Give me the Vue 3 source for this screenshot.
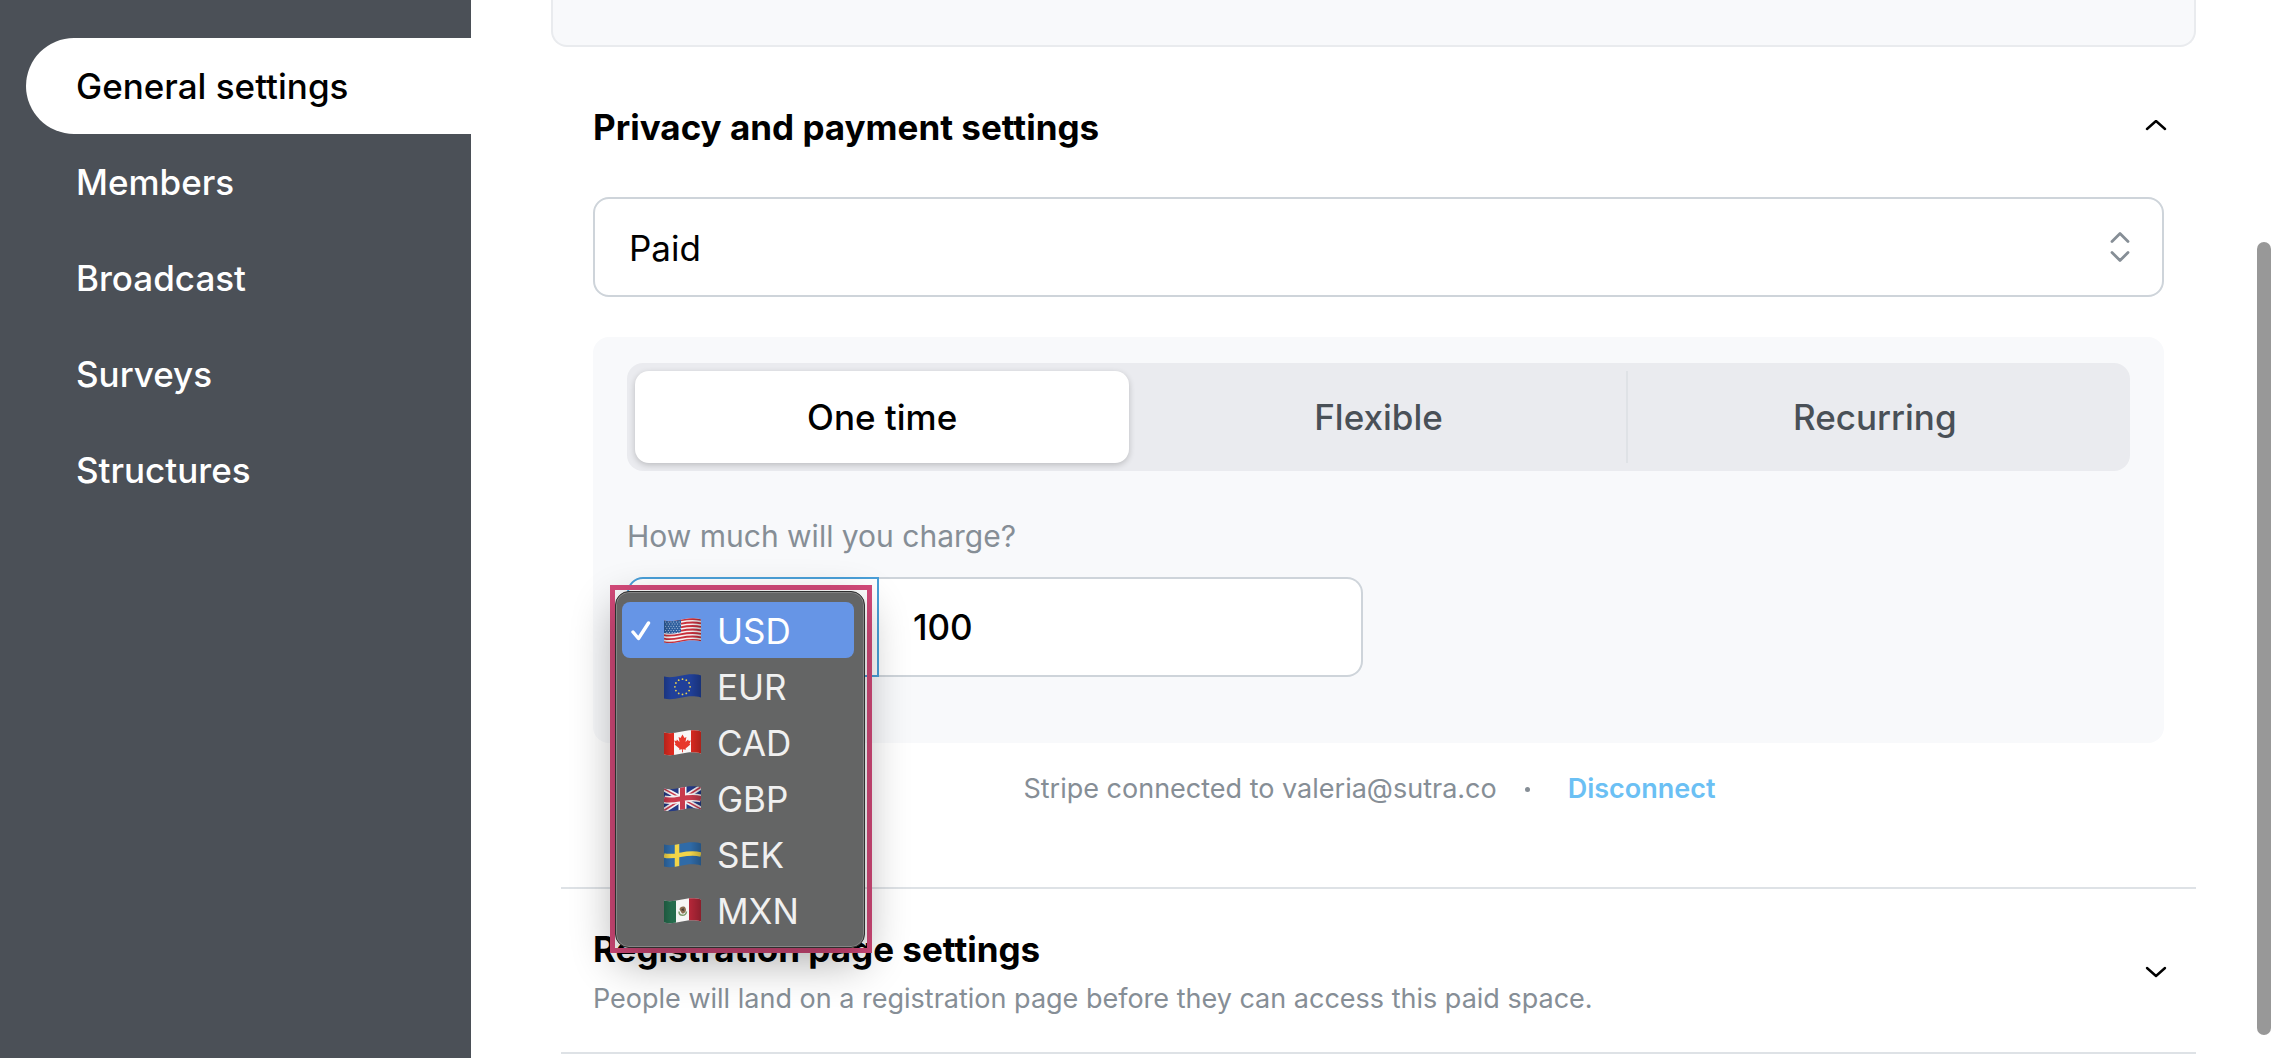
<script setup>
import { ref } from 'vue'

const navItems = ['General settings', 'Members', 'Broadcast', 'Surveys', 'Structures']
const activeItem = ref('General settings')

const plans = ['One time', 'Flexible', 'Recurring']
const plan = ref('One time')

const access = ref('Paid')
const currencies = ['USD', 'EUR', 'CAD', 'GBP', 'SEK', 'MXN']
const currency = ref('USD')
const amount = ref('100')

// Every stripe and edge of a flag follows the same wave
const wave = 'c12 3 22 -5 37 -1'
const stripes = [0, 1, 2, 3, 4, 5, 6].map((n) => 3 + n * 3.5)
const stars = Array.from({ length: 12 }, (_, n) => ({
  x: 18.5 + 7.6 * Math.sin((n * Math.PI) / 6),
  y: 12.8 - 7.6 * Math.cos((n * Math.PI) / 6),
}))
const unionDots = [0, 1, 2, 3, 4, 5].flatMap((r) =>
  [0, 1, 2, 3, 4, 5].map((c) => ({ x: 1.6 + c * 2.7 + (r % 2) * 1.2, y: 4 + r * 2.1 })),
)
</script>

<template>
  <div class="page">
    <svg class="defs" width="0" height="0" aria-hidden="true">
      <defs>
        <clipPath id="flag-shape">
          <path d="M0 2.5c12 3 22-5 37-1v22c-15-4-25 4-37 1z" />
        </clipPath>
        <linearGradient id="flag-shade">
          <stop offset="0" stop-color="#000" stop-opacity=".18" />
          <stop offset=".2" stop-color="#000" stop-opacity="0" />
          <stop offset=".7" stop-color="#000" stop-opacity="0" />
          <stop offset="1" stop-color="#000" stop-opacity=".22" />
        </linearGradient>
      </defs>
    </svg>

    <nav class="sidebar" aria-label="Settings">
      <a
        v-for="item in navItems"
        :key="item"
        href="#"
        class="nav-link"
        :class="{ active: item === activeItem }"
        @click.prevent="activeItem = item"
      >{{ item }}</a>
    </nav>

    <main class="content">
      <div class="card-end"></div>

      <section class="section">
        <div class="section-head">
          <h2>Privacy and payment settings</h2>
          <button class="toggle" type="button" aria-label="Collapse privacy and payment settings">
            <svg width="22" height="14" viewBox="0 0 22 14"><path d="m2 9 9-8 9 8" /></svg>
          </button>
        </div>

        <div class="access">
          <select v-model="access" class="field access-select" aria-label="Access">
            <option>Paid</option>
            <option>Free</option>
          </select>
          <svg class="access-icon" width="20" height="30" viewBox="0 0 20 30">
            <path d="m2 9.5 8-8 8 8M2 20.5l8 8 8-8" />
          </svg>
        </div>

        <div class="panel">
          <div class="segments" role="group" aria-label="Payment type">
            <button
              v-for="p in plans"
              :key="p"
              type="button"
              class="segment"
              :class="{ active: p === plan }"
              :aria-pressed="p === plan"
              @click="plan = p"
            >{{ p }}</button>
          </div>

          <label class="question" for="amount">How much will you charge?</label>
          <div class="charge">
            <div class="currency">
              <select v-model="currency" class="field currency-select" aria-label="Currency">
                <option v-for="c in currencies" :key="c">{{ c }}</option>
              </select>
              <div class="callout">
                <ul class="menu" role="listbox" aria-label="Currency">
                  <li
                    v-for="c in currencies"
                    :key="c"
                    class="option"
                    :class="{ selected: c === currency }"
                    role="option"
                    :aria-selected="c === currency"
                    @click="currency = c"
                  >
                    <svg class="check" width="20" height="20" viewBox="0 0 20 20">
                      <path v-if="c === currency" d="m2 11 5.5 6.5L17.500 2" />
                    </svg>
                    <svg class="flag" width="37" height="26" viewBox="0 0 37 26">
                      <g clip-path="url(#flag-shape)">
                        <template v-if="c === 'USD'">
                          <rect width="37" height="26" fill="#f6f3f3" />
                          <path
                            v-for="y in stripes"
                            :key="y"
                            :d="`M0 ${y}${wave}`"
                            fill="none"
                            stroke="#c8303c"
                            stroke-width="1.8"
                          />
                          <path d="M0 0h17v14.2c-6 1.5-11 2-17 .8z" fill="#2f5f9e" />
                          <circle
                            v-for="(d, n) in unionDots"
                            :key="n"
                            :cx="d.x"
                            :cy="d.y"
                            r=".5"
                            fill="#d5e2f2"
                          />
                        </template>
                        <template v-else-if="c === 'EUR'">
                          <rect width="37" height="26" fill="#20409a" />
                          <circle v-for="(s, n) in stars" :key="n" :cx="s.x" :cy="s.y" r=".9" fill="#e6cf4e" />
                        </template>
                        <template v-else-if="c === 'CAD'">
                          <rect width="37" height="26" fill="#f8f6f6" />
                          <path d="M0 0h10v26H0zM27 0h10v26H27z" fill="#dc2a20" />
                          <path
                            d="m18.5 4.5 2 3.4 1.900-1-.9 5 2.600-2.500.5 1.600 2.200-.4-1.300 3.300.9.700-4.800 4 .3 1.200-3-.5.1 3h-1l.1-3-3 .5.3-1.200-4.800-4 .9-.7-1.300-3.300 2.200.4.500-1.600 2.600 2.500-.9-5 1.900 1z"
                            fill="#e8382c"
                          />
                        </template>
                        <template v-else-if="c === 'GBP'">
                          <rect width="37" height="26" fill="#243a86" />
                          <path d="M0 3 37 23M0 24.500 37 1" stroke="#f4f1f3" stroke-width="5" />
                          <path d="M0 3 37 23M0 24.500 37 1" stroke="#c63a4c" stroke-width="1.5" />
                          <path d="M18.500 0v26M0 13.500c12 3 22-5 37-1" fill="none" stroke="#f4f1f3" stroke-width="8" />
                          <path d="M18.500 0v26M0 13.500c12 3 22-5 37-1" fill="none" stroke="#c93a4d" stroke-width="5" />
                        </template>
                        <template v-else-if="c === 'SEK'">
                          <rect width="37" height="26" fill="#2f6ba8" />
                          <path d="M13 0v26M0 13.500c12 3 22-5 37-1" fill="none" stroke="#f3d548" stroke-width="4.5" />
                        </template>
                        <template v-else>
                          <rect width="37" height="26" fill="#f6f5f4" />
                          <path d="M0 0h12v26H0z" fill="#246b4c" />
                          <path d="M25 0h12v26H25z" fill="#b32638" />
                          <path d="M15 13.500c0 5 7 5 7.500 0" fill="none" stroke="#7f9a6c" stroke-width="1.5" />
                          <path d="M15.500 11.500c0-3 5-4 6-1.500 1.500 3-1 6-3.500 5.500z" fill="#8a6b4f" />
                          <path d="m17 12 2.500-2 .5 3z" fill="#3f3a34" />
                        </template>
                        <rect width="37" height="26" fill="url(#flag-shade)" />
                      </g>
                    </svg>
                    <span>{{ c }}</span>
                  </li>
                </ul>
              </div>
            </div>
            <input id="amount" v-model="amount" class="field amount" type="text" inputmode="decimal" />
          </div>
        </div>

        <p class="stripe">
          <span>Stripe connected to valeria@sutra.co</span>
          <i class="dot"></i>
          <a href="#" class="disconnect">Disconnect</a>
        </p>
      </section>

      <section class="section registration">
        <div class="section-head">
          <div>
            <h2>Registration page settings</h2>
            <p class="hint">People will land on a registration page before they can access this paid space.</p>
          </div>
          <button class="toggle" type="button" aria-label="Expand registration page settings">
            <svg width="22" height="14" viewBox="0 0 22 14"><path d="m2 3 9 8 9-8" /></svg>
          </button>
        </div>
      </section>
    </main>

    <div class="scrollbar" aria-hidden="true"><div class="thumb"></div></div>
  </div>
</template>

<style>
body {
  margin: 0;
  background: #fff;
}
</style>

<style scoped>
* {
  box-sizing: border-box;
}

.page {
  position: relative;
  display: flex;
  min-height: 100vh;
  font-family: Inter, "Liberation Sans", sans-serif;
  font-size: 35px;
  line-height: 44px;
  color: #000;
}

.defs {
  position: absolute;
}

button,
input,
select {
  font: inherit;
  color: inherit;
}

h2,
p,
ul {
  margin: 0;
  padding: 0;
}

.sidebar {
  flex: none;
  display: flex;
  flex-direction: column;
  width: 471px;
  padding: 38px 0 0 26px;
  background: #4b5057;
}

.nav-link {
  display: flex;
  align-items: center;
  height: 96px;
  padding-left: 50px;
  border-radius: 48px 0 0 48px;
  color: #fff;
  font-weight: 500;
  text-decoration: none;
}

.nav-link.active {
  background: #fff;
  color: #000;
}

.content {
  flex: 1;
  min-width: 0;
  padding: 0 80px;
}

.card-end {
  height: 47px;
  border: 2px solid #e9ebee;
  border-top: 0;
  border-radius: 0 0 16px 16px;
  background: #f8f9fb;
}

.section {
  margin-left: 10px;
  padding: 58px 32px 80px;
  border-bottom: 2px solid #dee2e6;
}

.registration {
  padding-top: 38px;
  padding-bottom: 35px;
}

.section-head {
  display: flex;
  align-items: center;
  justify-content: space-between;
}

h2 {
  font-size: 35px;
  line-height: 44px;
  font-weight: 700;
}

.toggle {
  display: flex;
  margin-right: -3px;
  padding: 0;
  border: 0;
  background: none;
}

.toggle path {
  fill: none;
  stroke: #000;
  stroke-width: 2.4;
  stroke-linecap: round;
  stroke-linejoin: round;
}

.field {
  height: 100px;
  border: 2px solid #ced4da;
  border-radius: 16px;
  background: #fff;
  appearance: none;
  outline: none;
}

.access {
  position: relative;
  margin-top: 48px;
}

.access-select {
  display: block;
  width: 100%;
  padding: 2px 34px 0;
}

.access-icon {
  position: absolute;
  top: 35px;
  right: 34px;
  pointer-events: none;
}

.access-icon path {
  fill: none;
  stroke: #868e96;
  stroke-width: 2.8;
  stroke-linecap: round;
  stroke-linejoin: round;
}

.panel {
  margin-top: 40px;
  padding: 26px 34px 66px;
  border-radius: 16px;
  background: #f8f9fb;
}

.segments {
  display: flex;
  height: 108px;
  padding: 8px;
  border-radius: 16px;
  background: #eaebef;
}

.segment {
  flex: 1;
  padding: 0;
  border: 0;
  background: none;
  color: #495057;
  font-weight: 500;
}

.segment + .segment:not(.active) {
  border-left: 2px solid #dfe2e6;
}

.segment.active {
  border-radius: 14px;
  background: #fff;
  color: #000;
  box-shadow: 0 2px 6px rgba(0, 0, 0, 0.2);
}

.segment.active + .segment {
  border-left-color: transparent;
}

.question {
  display: block;
  margin: 45px 0 21px;
  font-size: 30px;
  line-height: 40px;
  color: #868e96;
}

.charge {
  display: flex;
  max-width: 736px;
}

.currency {
  position: relative;
  flex: none;
  width: 252px;
}

.currency-select {
  display: block;
  width: 100%;
  padding: 0 34px;
  border-color: #4a9fd8;
  border-radius: 16px 0 0 16px;
}

.amount {
  flex: 1;
  min-width: 0;
  padding: 0 34px;
  border-left: 0;
  border-radius: 0 16px 16px 0;
  font-weight: 500;
}

.callout {
  position: absolute;
  z-index: 2;
  top: 8px;
  left: -17px;
  width: 262px;
  padding: 1px 2px 0 0;
  border: 5px solid #d44a7a;
}

.menu {
  padding: 10px 10px 9px 6px;
  border: 1px solid #2e2e2e;
  border-radius: 14px;
  background: #646565;
  box-shadow: inset 0 0 0 1px #858585, 0 14px 44px rgba(0, 0, 0, 0.32);
  list-style: none;
}

.option {
  display: flex;
  align-items: center;
  height: 56px;
  padding: 2px 0 0 9px;
  border-radius: 8px;
  color: #f0f0f0;
}

.option.selected {
  background: #6695e6;
  color: #fff;
}

.check {
  flex: none;
  margin-right: 13px;
}

.check path {
  fill: none;
  stroke: #fff;
  stroke-width: 3.4;
  stroke-linecap: round;
  stroke-linejoin: round;
}

.flag {
  flex: none;
  margin-right: 16px;
}

.stripe {
  display: flex;
  align-items: center;
  justify-content: center;
  margin-top: 28px;
  padding-right: 18px;
  font-size: 27px;
  line-height: 36px;
  color: #868e96;
}

.dot {
  width: 5px;
  height: 5px;
  margin: 0 38px 0 28px;
  border-radius: 50%;
  background: #868e96;
}

.disconnect {
  color: #6bc0f4;
  font-weight: 600;
  text-decoration: none;
}

.hint {
  margin-top: 10px;
  font-size: 27px;
  line-height: 36px;
  color: #868e96;
}

.scrollbar {
  position: absolute;
  top: 0;
  right: 5px;
  bottom: 0;
  display: flex;
  width: 14px;
  padding: 242px 0 23px;
}

.thumb {
  flex: 1;
  border-radius: 7px;
  background: #989898;
}
</style>
